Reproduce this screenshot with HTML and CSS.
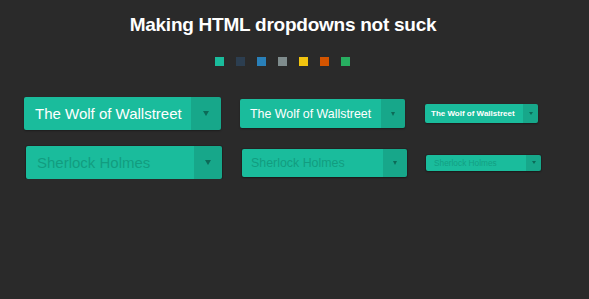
FILE: index.html
```html
<!DOCTYPE html>
<html lang="en">
<head>
	<meta charset="UTF-8">
	<meta name="viewport" content="width=device-width, initial-scale=1.0">
	<title>Making HTML dropdowns not suck</title>
	<link rel="stylesheet" href="styles.css">
</head>
<body>
<div class="page">
	<h1 class="title">Making HTML dropdowns not suck</h1>
	<ul class="swatches">
		<li class="turquoise"></li>
		<li class="midnight"></li>
		<li class="belize"></li>
		<li class="asbestos"></li>
		<li class="sunflower"></li>
		<li class="pumpkin"></li>
		<li class="nephritis"></li>
	</ul>
	<div class="row row-custom">
		<div class="dropdown large">
			<span class="label">The Wolf of Wallstreet</span>
			<span class="arrow"><i></i></span>
		</div>
		<div class="dropdown medium">
			<span class="label">The Wolf of Wallstreet</span>
			<span class="arrow"><i></i></span>
		</div>
		<div class="dropdown small">
			<span class="label">The Wolf of Wallstreet</span>
			<span class="arrow"><i></i></span>
		</div>
	</div>
	<div class="row row-native">
		<div class="dropdown large">
			<span class="label">Sherlock Holmes</span>
			<span class="arrow"><i></i></span>
		</div>
		<div class="dropdown medium">
			<span class="label">Sherlock Holmes</span>
			<span class="arrow"><i></i></span>
		</div>
		<div class="dropdown small">
			<span class="label">Sherlock Holmes</span>
			<span class="arrow"><i></i></span>
		</div>
	</div>
</div>
</body>
</html>
```

FILE: styles.css
```css
html, body {
	margin: 0;
	padding: 0;
}
body {
	background: #2a2a2a;
	font-family: "Liberation Sans", Arial, sans-serif;
	color: #fff;
}
.page {
	width: 566px;
	padding-top: 13px;
}
.title {
	margin: 0;
	font-size: 19px;
	line-height: 24px;
	letter-spacing: -0.25px;
	text-align: center;
	font-weight: bold;
}

/* colour swatches */
.swatches {
	display: flex;
	justify-content: center;
	gap: 12px;
	margin: 20px 0 0;
	padding: 0 2px 0 0;
	list-style: none;
}
.swatches > li {
	width: 9px;
	height: 9px;
}
.swatches .turquoise { background: #1abc9c; }
.swatches .midnight { background: #2c3e50; }
.swatches .belize { background: #2980b9; }
.swatches .asbestos { background: #7f8c8d; }
.swatches .sunflower { background: #f1c40f; }
.swatches .pumpkin { background: #d35400; }
.swatches .nephritis { background: #27ae60; }

/* dropdown rows */
.row {
	display: flex;
	align-items: center;
}
.row-custom {
	margin-top: 31px;
	padding-left: 24px;
	height: 33px;
}
.row-native {
	margin-top: 16px;
	padding-left: 26px;
	height: 33px;
}

.dropdown {
	display: flex;
	align-items: stretch;
	background: #1abc9c;
	border-radius: 2px;
	box-shadow: 0 1px 2px rgba(0, 0, 0, 0.35);
	overflow: hidden;
}
.dropdown > .label {
	flex: 1;
	display: flex;
	align-items: center;
	white-space: nowrap;
}
.dropdown > .arrow {
	display: flex;
	align-items: center;
	justify-content: center;
	background: rgba(0, 0, 0, 0.11);
}
.dropdown > .arrow > i {
	width: 0;
	height: 0;
	border-left: 3px solid transparent;
	border-right: 3px solid transparent;
	border-top: 5px solid #0c6b58;
}

.row-native .dropdown {
	box-shadow: 0 0 0 1px rgba(0, 0, 0, 0.12), 0 1px 2px rgba(0, 0, 0, 0.3);
}
.row-native .dropdown > .label {
	color: #129c80;
}

/* sizes */
.row-custom .large { width: 197px; height: 33px; }
.row-custom .large > .label { padding-left: 11px; font-size: 15px; }
.row-custom .large > .arrow { width: 30px; }

.row-custom .medium { width: 165px; height: 29px; margin-left: 19px; }
.row-custom .medium > .label { padding-left: 10px; font-size: 12.4px; }
.row-custom .medium > .arrow { width: 24px; }
.row-custom .medium > .arrow > i { border-width: 4px 2.5px 0; }

.row-custom .small { width: 113px; height: 19px; margin-left: 20px; }
.row-custom .small > .label { padding-left: 6px; font-size: 8px; font-weight: bold; }
.row-custom .small > .arrow { width: 15px; }
.row-custom .small > .arrow > i { border-width: 3px 2px 0; }

.row-native .large { width: 196px; height: 33px; }
.row-native .large > .label { padding-left: 11px; font-size: 15px; }
.row-native .large > .arrow { width: 28px; }

.row-native .medium { width: 165px; height: 28px; margin-left: 20px; }
.row-native .medium > .label { padding-left: 9px; font-size: 12.4px; }
.row-native .medium > .arrow { width: 24px; }
.row-native .medium > .arrow > i { border-width: 4px 2.5px 0; }

.row-native .small { width: 115px; height: 16px; margin-left: 19px; }
.row-native .small > .label { padding-left: 8px; font-size: 8.3px; color: #139f83; }
.row-native .small > .arrow { width: 15px; }
.row-native .small > .arrow > i { border-width: 3px 2px 0; }
```
